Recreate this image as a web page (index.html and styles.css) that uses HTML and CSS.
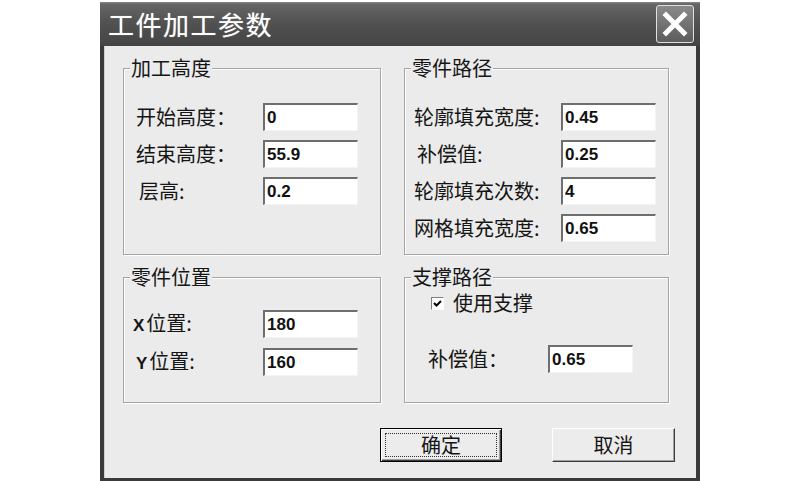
FILE: index.html
```html
<!DOCTYPE html>
<html lang="zh">
<head>
<meta charset="utf-8">
<title>工件加工参数</title>
<link rel="stylesheet" href="styles.css">
</head>
<body>
<div class="dialog">
  <div class="titlebar">
    <span class="title">工件加工参数</span>
    <span class="close">
      <svg width="38" height="38" viewBox="0 0 38 38">
        <path d="M10 10 L28 28 M28 10 L10 28" stroke="#fff" stroke-width="5" stroke-linecap="square"/>
      </svg>
    </span>
  </div>
  <div class="content">
    <div class="groups">
      <fieldset class="group">
        <legend>加工高度</legend>
        <div class="rows rows-height">
          <span class="lbl">开始高度：</span><input class="field" value="0" readonly>
          <span class="lbl">结束高度：</span><input class="field" value="55.9" readonly>
          <span class="lbl lbl-indent">层高:</span><input class="field" value="0.2" readonly>
        </div>
      </fieldset>
      <fieldset class="group">
        <legend>零件路径</legend>
        <div class="rows rows-path">
          <span class="lbl">轮廓填充宽度:</span><input class="field" value="0.45" readonly>
          <span class="lbl lbl-indent">补偿值:</span><input class="field" value="0.25" readonly>
          <span class="lbl">轮廓填充次数:</span><input class="field" value="4" readonly>
          <span class="lbl">网格填充宽度:</span><input class="field" value="0.65" readonly>
        </div>
      </fieldset>
      <fieldset class="group">
        <legend>零件位置</legend>
        <div class="rows rows-pos">
          <span class="lbl"><b class="axis">X</b>位置:</span><input class="field" value="180" readonly>
          <span class="lbl lbl-indent"><b class="axis">Y</b>位置:</span><input class="field" value="160" readonly>
        </div>
      </fieldset>
      <fieldset class="group">
        <legend>支撑路径</legend>
        <div class="check-row">
          <span class="checkbox">
            <svg width="11" height="11" viewBox="0 0 11 11">
              <path d="M2 5 L4.5 7.5 L9 3" fill="none" stroke="#000" stroke-width="2"/>
            </svg>
          </span>
          <span class="check-text">使用支撑</span>
        </div>
        <div class="rows rows-support">
          <span class="lbl">补偿值：</span><input class="field field-narrow" value="0.65" readonly>
        </div>
      </fieldset>
    </div>
    <div class="buttons">
      <span class="btn btn-default">确定</span>
      <span class="btn">取消</span>
    </div>
  </div>
</div>
</body>
</html>
```

FILE: styles.css
```css
html, body {
  margin: 0;
  padding: 0;
  background: #fff;
}

body {
  font-family: "Noto Sans CJK SC", "Noto Sans", sans-serif;
  color: #151515;
}

.dialog {
  margin: 2px 0 0 100px;
  width: 600px;
  height: 479px;
  box-sizing: border-box;
  background: #3a3a3a;
  padding: 0 4px 3px;
  display: flex;
  flex-direction: column;
}

.titlebar {
  flex: none;
  height: 44px;
  margin: 0 -4px;
  padding: 0 6px 0 8px;
  display: flex;
  align-items: center;
  justify-content: space-between;
  background: linear-gradient(#8a8a8a 0, #666 2px, #525252 45%, #444 100%);
}

.title {
  color: #fff;
  font-size: 26px;
  font-weight: 400;
  line-height: 30px;
  letter-spacing: 1.5px;
  text-shadow: 0 0 1px rgba(255,255,255,0.5);
}

.close {
  width: 38px;
  height: 38px;
  box-sizing: border-box;
  border: 1px solid #e0e0e0;
  border-radius: 3px;
  background: linear-gradient(#8a8a8a, #5c5c5c);
  display: flex;
  align-items: center;
  justify-content: center;
}

.close svg {
  display: block;
  margin: -1px;
}

.content {
  flex: 1;
  background: #ebebeb;
  padding: 11px 28px 0 18px;
  border-left: 1px solid #cfcfcf;
}

.groups {
  display: grid;
  grid-template-columns: 258px 265px;
  grid-template-rows: 198px 137px;
  column-gap: 23px;
  row-gap: 11px;
}

.group {
  margin: 0;
  padding: 0 0 0 6px;
  min-width: 0;
  box-sizing: border-box;
  border: 1px solid #a4a4a4;
  box-shadow: 1px 1px 0 #fff, inset 1px 1px 0 #fff;
}

.group legend {
  font-size: 20px;
  line-height: 22px;
  padding: 0 1px;
  background: #ebebeb;
}

.rows {
  display: grid;
  grid-auto-rows: 28px;
  row-gap: 9px;
  align-items: center;
}

.rows-height {
  margin: 24px 0 0 6px;
  grid-template-columns: 127px 95px;
}

.rows-path {
  margin: 24px 0 0 3px;
  grid-template-columns: 147px 95px;
}

.rows-pos {
  margin: 22px 0 0 3px;
  grid-template-columns: 130px 95px;
  row-gap: 10px;
}

.rows-support {
  margin: 27px 0 0 17px;
  grid-template-columns: 120px 85px;
}

.lbl {
  font-size: 20px;
  line-height: 24px;
  white-space: nowrap;
}

.lbl-indent {
  padding-left: 3px;
}

.axis {
  font-family: "Liberation Sans", Arial, sans-serif;
  font-weight: bold;
  font-size: 17px;
  margin-right: 2px;
}

.field {
  width: 95px;
  height: 28px;
  box-sizing: border-box;
  margin: 0;
  padding: 1px 0 0 2px;
  background: #fff;
  border-style: solid;
  border-width: 2px 1px 1px 2px;
  border-color: #6e6e6e #f4f4f4 #f4f4f4 #6e6e6e;
  font-family: "Liberation Sans", Arial, sans-serif;
  font-weight: bold;
  font-size: 17px;
  color: #111;
  outline: none;
}

.field-narrow {
  width: 85px;
}

.check-row {
  height: 30px;
  margin-left: 20px;
  display: flex;
  align-items: center;
}

.checkbox {
  width: 13px;
  height: 13px;
  box-sizing: border-box;
  background: #fff;
  border-style: solid;
  border-width: 1px;
  border-color: #808080 #fff #fff #808080;
  display: flex;
  align-items: center;
  justify-content: center;
}

.checkbox svg {
  display: block;
}

.check-text {
  margin-left: 9px;
  font-size: 20px;
  line-height: 24px;
}

.buttons {
  margin: 25px -7px 0 0;
  display: flex;
  justify-content: flex-end;
  gap: 50px;
}

.btn {
  position: relative;
  width: 123px;
  height: 34px;
  box-sizing: border-box;
  background: #ececec;
  border: 1px solid;
  border-color: #fff #3c3c3c #3c3c3c #fff;
  box-shadow: inset -1px -1px 0 #a0a0a0;
  font-size: 20px;
  line-height: 28px;
  display: flex;
  align-items: center;
  justify-content: center;
}

.btn-default {
  width: 122px;
  border-color: #000;
  box-shadow: inset 1px 1px 0 #fff, inset -1px -1px 0 #3c3c3c, inset -2px -2px 0 #a0a0a0;
}

.btn-default::after {
  content: "";
  position: absolute;
  left: 4px;
  top: 4px;
  right: 4px;
  bottom: 4px;
  border: 1px dotted #333;
}
```
